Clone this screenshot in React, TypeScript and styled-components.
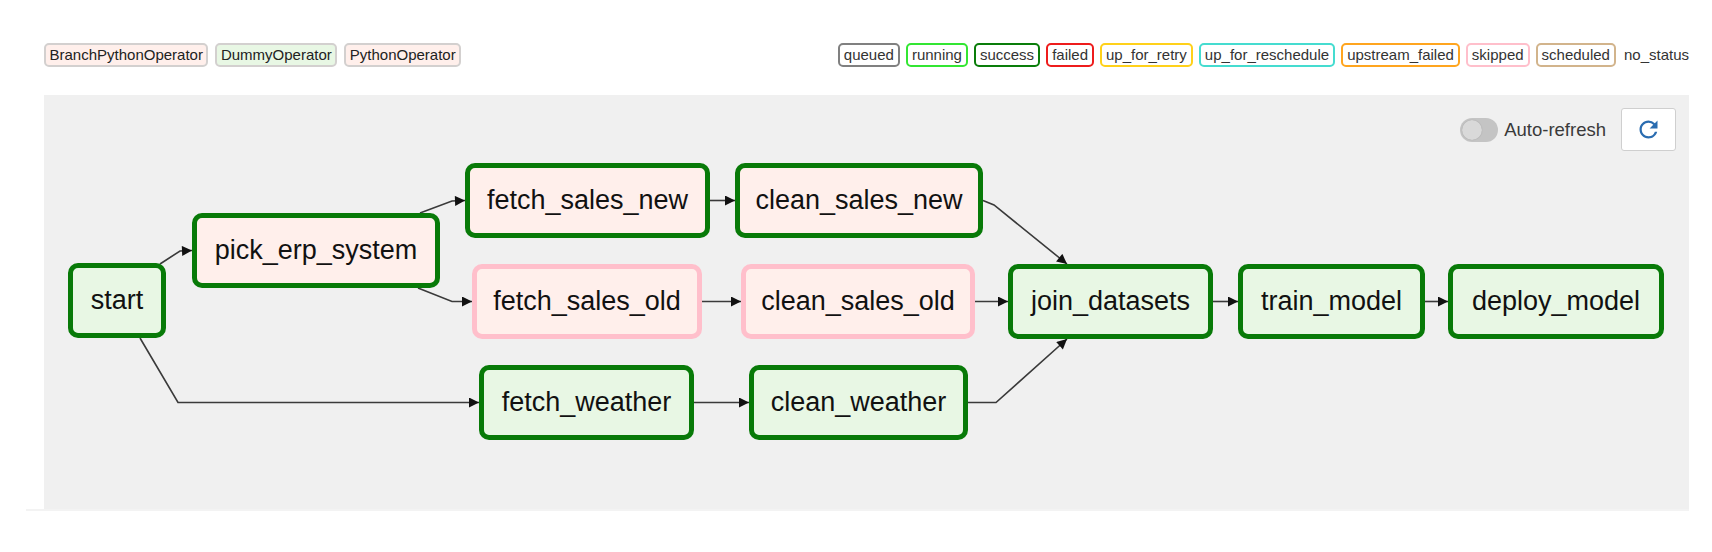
import React from "react";
import styled, { createGlobalStyle } from "styled-components";
import { MdRefresh } from "react-icons/md";

const Global = createGlobalStyle`
  html, body { margin: 0; padding: 0; background: #ffffff; }
  body { font-family: "Liberation Sans", Arial, Helvetica, sans-serif; color: #333; }
`;

const Page = styled.div`
  width: 1712px;
  height: 552px;
  padding-top: 43px;
  box-sizing: border-box;
  overflow: hidden;
`;

const LegendRow = styled.div`
  display: flex;
  justify-content: space-between;
  align-items: center;
  margin-left: 44px;
  width: 1645px;
  height: 24px;
`;

const LegendGroup = styled.div<{ $gap: number }>`
  display: flex;
  align-items: center;
  gap: ${(p) => p.$gap}px;
`;

const OperatorTag = styled.span<{ $bg: string }>`
  display: inline-block;
  box-sizing: border-box;
  height: 24px;
  line-height: 20px;
  padding: 0 3.5px;
  font-size: 15px;
  color: #222;
  background: ${(p) => p.$bg};
  border: 2px solid #d3d0cf;
  border-radius: 5px;
  white-space: nowrap;
`;

const StateTag = styled.span<{ $color: string }>`
  display: inline-block;
  box-sizing: border-box;
  height: 24px;
  line-height: 20px;
  padding: 0 4px;
  font-size: 15px;
  color: #333;
  background: #fff;
  border: 2px solid ${(p) => p.$color};
  border-radius: 5px;
  white-space: nowrap;
`;

const PlainState = styled.span`
  font-size: 15px;
  color: #333;
  padding-left: 2px;
  line-height: 20px;
  white-space: nowrap;
`;

const Section = styled.div`
  margin-top: 28px;
  margin-left: 26px;
  width: 1663px;
  padding-left: 18px;
  box-sizing: border-box;
  border-bottom: 2px solid #f3f3f3;
`;

const Panel = styled.div`
  background: #f0f0f0;
  height: 414px;
  display: flex;
  flex-direction: column;
`;

const Toolbar = styled.div`
  display: flex;
  justify-content: flex-end;
  align-items: center;
  padding: 13px 13px 0 0;
  height: 43px;
`;

const Switch = styled.span`
  position: relative;
  display: inline-block;
  width: 38px;
  height: 24px;
  border-radius: 12px;
  background: #c4c4c4;
  margin-right: 6px;
`;

const Knob = styled.span`
  position: absolute;
  left: 2px;
  top: 2px;
  width: 20px;
  height: 20px;
  border-radius: 50%;
  background: #d9d9d9;
  box-shadow: 0 0 1px rgba(0, 0, 0, 0.25);
`;

const SwitchLabel = styled.span`
  font-size: 18.5px;
  color: #3a3a3a;
  margin-right: 15px;
`;

const RefreshButton = styled.button`
  width: 55px;
  height: 43px;
  display: flex;
  align-items: center;
  justify-content: center;
  background: #fff;
  border: 1px solid #cfcfcf;
  border-radius: 3px;
  color: #2a6cb0;
  padding: 0;
`;

const Canvas = styled.div`
  position: relative;
  flex: 1;
`;

const Edges = styled.svg`
  position: absolute;
  left: 0;
  top: 0;
`;

const Node = styled.div<{ $fill: string; $stroke: string }>`
  position: absolute;
  box-sizing: border-box;
  height: 75px;
  display: flex;
  align-items: center;
  justify-content: center;
  background: ${(p) => p.$fill};
  border: 5px solid ${(p) => p.$stroke};
  border-radius: 10px;
  font-size: 27px;
  color: #111;
  white-space: nowrap;
`;

const DUMMY = "#e8f7e4";
const PY = "#ffefeb";
const GREEN = "#087a08";
const PINK = "#ffbfcb";

type N = { id: string; x: number; y: number; w: number; fill: string; stroke: string };

const nodes: N[] = [
  { id: "start", x: 24, y: 112, w: 98, fill: DUMMY, stroke: GREEN },
  { id: "pick_erp_system", x: 148, y: 62, w: 248, fill: PY, stroke: GREEN },
  { id: "fetch_sales_new", x: 421, y: 12, w: 245, fill: PY, stroke: GREEN },
  { id: "clean_sales_new", x: 691, y: 12, w: 248, fill: PY, stroke: GREEN },
  { id: "fetch_sales_old", x: 428, y: 113, w: 230, fill: PY, stroke: PINK },
  { id: "clean_sales_old", x: 697, y: 113, w: 234, fill: PY, stroke: PINK },
  { id: "join_datasets", x: 964, y: 113, w: 205, fill: DUMMY, stroke: GREEN },
  { id: "train_model", x: 1194, y: 113, w: 187, fill: DUMMY, stroke: GREEN },
  { id: "deploy_model", x: 1404, y: 113, w: 216, fill: DUMMY, stroke: GREEN },
  { id: "fetch_weather", x: 435, y: 214, w: 215, fill: DUMMY, stroke: GREEN },
  { id: "clean_weather", x: 705, y: 214, w: 219, fill: DUMMY, stroke: GREEN },
];

const edges: string[] = [
  "M116,113 L136,100 L148,99.5",
  "M376,62 L408,50 L421,49.5",
  "M374,137 L408,150.5 L428,150.5",
  "M666,49.5 L691,49.5",
  "M658,150.5 L697,150.5",
  "M939,49.5 L950,54 L1023,113",
  "M931,150.5 L964,150.5",
  "M924,251.5 L952,251.5 L1023,188",
  "M1169,150.5 L1194,150.5",
  "M1381,150.5 L1404,150.5",
  "M96,187 L134,251.5 L435,251.5",
  "M650,251.5 L705,251.5",
];

const operators = [
  { name: "BranchPythonOperator", bg: PY },
  { name: "DummyOperator", bg: DUMMY },
  { name: "PythonOperator", bg: PY },
];

const states = [
  { name: "queued", color: "#808080" },
  { name: "running", color: "#33e633" },
  { name: "success", color: "#0a7d0a" },
  { name: "failed", color: "#ee1c1c" },
  { name: "up_for_retry", color: "#ffd11a" },
  { name: "up_for_reschedule", color: "#45dcd0" },
  { name: "upstream_failed", color: "#ffa51f" },
  { name: "skipped", color: "#ffbfcb" },
  { name: "scheduled", color: "#d2b48c" },
];

export default function App() {
  return (
    <>
      <Global />
      <Page>
        <LegendRow>
          <LegendGroup $gap={7}>
            {operators.map((o) => (
              <OperatorTag key={o.name} $bg={o.bg}>
                {o.name}
              </OperatorTag>
            ))}
          </LegendGroup>
          <LegendGroup $gap={6}>
            {states.map((s) => (
              <StateTag key={s.name} $color={s.color}>
                {s.name}
              </StateTag>
            ))}
            <PlainState>no_status</PlainState>
          </LegendGroup>
        </LegendRow>
        <Section>
          <Panel>
            <Toolbar>
              <Switch>
                <Knob />
              </Switch>
              <SwitchLabel>Auto-refresh</SwitchLabel>
              <RefreshButton aria-label="refresh">
                <MdRefresh size={27} />
              </RefreshButton>
            </Toolbar>
            <Canvas>
              <Edges width="1645" height="358" viewBox="0 0 1645 358">
                <defs>
                  <marker
                    id="arrow"
                    viewBox="0 0 10 10"
                    refX="10"
                    refY="5"
                    markerUnits="userSpaceOnUse"
                    markerWidth="11"
                    markerHeight="10"
                    orient="auto"
                  >
                    <path d="M0,0 L10,5 L0,10 z" fill="#111" />
                  </marker>
                </defs>
                {edges.map((d, i) => (
                  <path
                    key={i}
                    d={d}
                    fill="none"
                    stroke="#3a3a3a"
                    strokeWidth={1.6}
                    markerEnd="url(#arrow)"
                  />
                ))}
              </Edges>
              {nodes.map((n) => (
                <Node
                  key={n.id}
                  $fill={n.fill}
                  $stroke={n.stroke}
                  style={{ left: n.x, top: n.y, width: n.w }}
                >
                  {n.id}
                </Node>
              ))}
            </Canvas>
          </Panel>
        </Section>
      </Page>
    </>
  );
}
